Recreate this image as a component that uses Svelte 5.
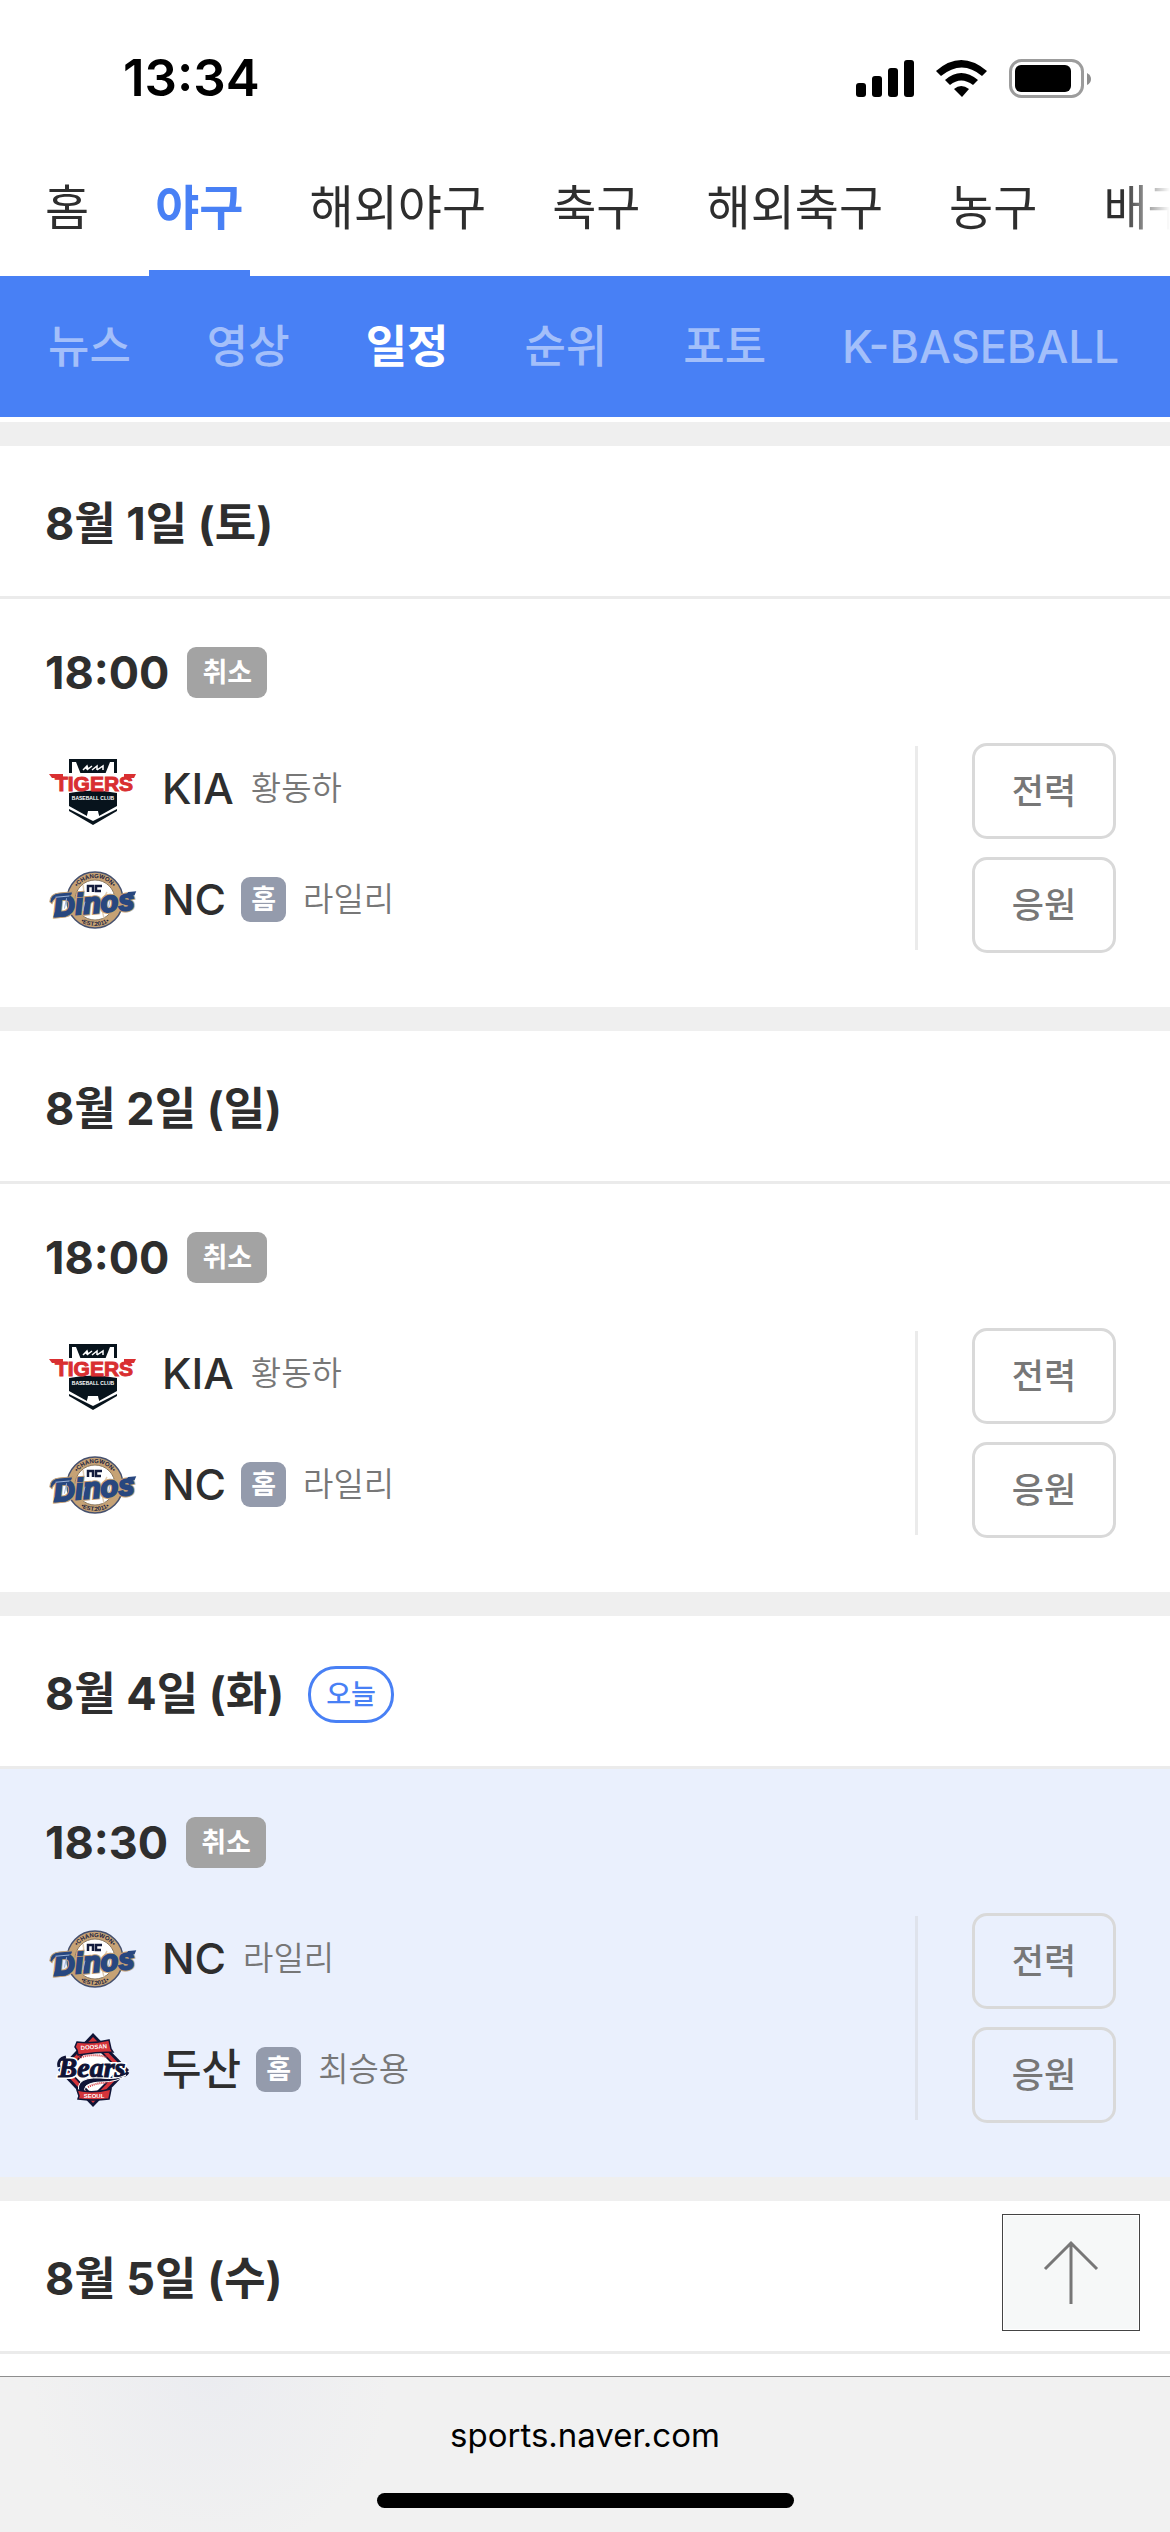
<script>
  const sports = ['홈', '야구', '해외야구', '축구', '해외축구', '농구', '배구'];
  const menus = ['뉴스', '영상', '일정', '순위', '포토', 'K-BASEBALL'];

  let sport = $state('야구');
  let menu = $state('일정');

  const days = [
    {
      date: '8월 1일 (토)',
      games: [
        {
          time: '18:00',
          status: '취소',
          teams: [
            { name: 'KIA', logo: 'kia', pitcher: '황동하' },
            { name: 'NC', logo: 'nc', pitcher: '라일리', home: true }
          ]
        }
      ]
    },
    {
      date: '8월 2일 (일)',
      games: [
        {
          time: '18:00',
          status: '취소',
          teams: [
            { name: 'KIA', logo: 'kia', pitcher: '황동하' },
            { name: 'NC', logo: 'nc', pitcher: '라일리', home: true }
          ]
        }
      ]
    },
    {
      date: '8월 4일 (화)',
      today: true,
      games: [
        {
          time: '18:30',
          status: '취소',
          teams: [
            { name: 'NC', logo: 'nc', pitcher: '라일리' },
            { name: '두산', logo: 'doosan', pitcher: '최승용', home: true }
          ]
        }
      ]
    },
    { date: '8월 5일 (수)', games: [] }
  ];

  let schedule;
  const toTop = () => schedule.scrollTo({ top: 0 });
</script>

{#snippet kia()}
  <svg class="logo" viewBox="0 0 90 90" aria-hidden="true">
    <path d="M21 16h48v18H21z" fill="#07131c" />
    <path d="M24 19h4l6 15H24zM66 19h-4l-6 15h10z" fill="#fff" />
    <path d="M35 27l4-4 1 3 4-3M44 27l5-4v4M38 25l2 2M49 27l6-4v4" fill="none" stroke="#fff" stroke-width="1.5" />
    <path d="M21 50q24-5 48 0v18L45 82 21 68z" fill="#07131c" />
    <path d="M21 63l18 10 1-5h10l1 5 18-10v3L45 78 21 66z" fill="#fff" />
    <path d="M39 73l2-5h8l2 5-6 3z" fill="#fff" />
    <path d="M2 30h86l-2 8v13q-41-8-71 0l-7-2-1-10-3-1z" fill="#fff" />
    <text x="46" y="48" text-anchor="middle" class="tigers">TIGERS</text>
    <path d="M1 31h14v4H4zM76 31h12l-2 4H76z" fill="#d92f31" />
    <text x="45" y="57" text-anchor="middle" class="club">BASEBALL CLUB</text>
  </svg>
{/snippet}

{#snippet nc()}
  <svg class="logo" viewBox="0 0 90 90" aria-hidden="true">
    <circle cx="47" cy="46" r="28" fill="#c6a275" stroke="#45506e" stroke-width="1.5" />
    <circle cx="47" cy="46" r="20" fill="#fff" stroke="#8b7860" stroke-width="1" />
    <path d="M35 31q3 14-7 21M59 38q-8 12-3 26" fill="none" stroke="#e2cfb5" stroke-width="1.5" />
    <path id="nc-top" d="M25 46a22 22 0 0 1 44 0" fill="none" />
    <path id="nc-bottom" d="M21 46a26 26 0 0 0 52 0" fill="none" />
    <text class="ring"><textPath href="#nc-top" startOffset="50%" text-anchor="middle">•CHANGWON•</textPath></text>
    <text class="ring"><textPath href="#nc-bottom" startOffset="50%" text-anchor="middle">•EST.2011•</textPath></text>
    <path d="M40 38v-6h5v6M54 32h-6v5h5" fill="none" stroke="#131c3d" stroke-width="2.5" />
    <g transform="rotate(-5 45 48)">
      <text x="46" y="59" text-anchor="middle" class="dinos dinos-edge">Dinos</text>
      <path d="M2 44q1-8 10-8h14l-2 4H12q-5 0-8 6z" fill="#28477f" stroke="#c6a275" />
      <path d="M77 45l4-4h8l-2 4z" fill="#28477f" />
      <path d="M6 55h14l-3 5H4z" fill="#28477f" />
      <text x="46" y="59" text-anchor="middle" class="dinos">Dinos</text>
      <path d="M8 40h14M19 42l-3 10M37 47l-3 9M62 48l-2 7" stroke="#9db4d8" stroke-width="1" />
    </g>
  </svg>
{/snippet}

{#snippet doosan()}
  <svg class="logo" viewBox="0 0 90 90" aria-hidden="true">
    <path d="M45 9l36 37-36 37L10 46z" fill="#101436" />
    <path d="M45 13l32 33-32 33-31-33z" fill="#d4343a" />
    <path d="M45 18l27 28-27 28-26-28z" fill="#101436" />
    <path d="M45 21l25 25-25 25-24-25z" fill="#fff" />
    <path d="M29 18q16 2 32-2l2 9 2 3q-18 0-35 3l-1-5-2-3z" fill="#d4343a" stroke="#101436" stroke-width="1.5" />
    <text x="46" y="25" text-anchor="middle" class="ribbon" transform="rotate(-4 46 25)">DOOSAN</text>
    <path d="M31 34q12-5 28-1" fill="none" stroke="#d4343a" stroke-width="2" stroke-dasharray="1 1" />
    <text x="44" y="53" text-anchor="middle" class="bears bears-edge">Bears</text>
    <text x="44" y="53" text-anchor="middle" class="bears">Bears</text>
    <path d="M11 43q-2-8 7-10M72 51q5 2 8-3" fill="none" stroke="#101436" stroke-width="3" />
    <path d="M78 51q-10 5-25 3-16-1-21 5-4 6 2 12l4-2q-3-4 0-7 5-4 16-4 16 0 24-7z" fill="#101436" stroke="#fff" stroke-width="1" />
    <path d="M40 63q10-5 21-4" fill="none" stroke="#d4343a" stroke-width="2" stroke-dasharray="1 1" />
    <path d="M29 66q16 4 34-1l-1 5-1 5q-16 2-31 0l1-3z" fill="#d4343a" stroke="#101436" stroke-width="1.5" />
    <text x="46" y="74" text-anchor="middle" class="ribbon">SEOUL</text>
  </svg>
{/snippet}

<div class="screen">
  <div class="status-bar">
    <span class="clock">13:34</span>
    <svg class="status-icons" viewBox="0 0 236 40" aria-hidden="true">
      <rect x="0" y="25" width="10" height="14" rx="3" />
      <rect x="16" y="18" width="10" height="21" rx="3" />
      <rect x="32" y="10" width="10" height="29" rx="3" />
      <rect x="48" y="2" width="10" height="37" rx="3" />
      <path d="M80 13q25-22 51 0l-5 5q-20-17-41 0z" />
      <path d="M89 22q16-14 33 0l-5 5q-12-9-23 0z" />
      <path d="M98 31q7-6 15 0l-7 8z" />
      <rect x="154.500" y="2.500" width="72" height="36" rx="11" fill="none" stroke="#9c9c9c" stroke-width="3" />
      <rect x="159" y="7" width="56" height="27" rx="6" />
      <path d="M231 15q4 2 4 6t-4 6z" fill="#8e8e8e" />
    </svg>
  </div>

  <nav class="sports" aria-label="종목">
    {#each sports as name}
      <a href="#{name}" class:active={name === sport} onclick={() => (sport = name)}>{name}</a>
    {/each}
  </nav>

  <nav class="menus" aria-label="메뉴">
    {#each menus as name}
      <a href="#{name}" class:active={name === menu} onclick={() => (menu = name)}>{name}</a>
    {/each}
  </nav>

  <div class="content">
    <main bind:this={schedule}>
      {#each days as day}
        <section class:today={day.today}>
          <header>
            <h2>{day.date}</h2>
            {#if day.today}<span class="today-badge">오늘</span>{/if}
          </header>
          {#each day.games as game}
            <article>
              <div class="time-row">
                <time>{game.time}</time>
                <span class="status">{game.status}</span>
              </div>
              <div class="match">
                <ul class="teams">
                  {#each game.teams as team}
                    <li>
                      {#if team.logo === 'kia'}
                        {@render kia()}
                      {:else if team.logo === 'nc'}
                        {@render nc()}
                      {:else}
                        {@render doosan()}
                      {/if}
                      <strong>{team.name}</strong>
                      {#if team.home}<span class="home">홈</span>{/if}
                      <span class="pitcher">{team.pitcher}</span>
                    </li>
                  {/each}
                </ul>
                <div class="divider"></div>
                <div class="actions">
                  <button type="button">전력</button>
                  <button type="button">응원</button>
                </div>
              </div>
            </article>
          {/each}
        </section>
      {/each}
    </main>
    <button type="button" class="top" aria-label="맨 위로" onclick={toTop}>
      <svg viewBox="0 0 60 66" aria-hidden="true">
        <path d="M30 64V3M4 29L30 3l26 26" fill="none" stroke="#777" stroke-width="3" />
      </svg>
    </button>
  </div>

  <footer>
    <span class="url">sports.naver.com</span>
    <div class="home-bar"></div>
  </footer>
</div>

<style>
  :global(body) {
    margin: 0;
    background: #fff;
  }

  .screen {
    display: flex;
    flex-direction: column;
    height: 100vh;
    overflow: hidden;
    color: #2e2e2e;
    font-family: Inter, 'Noto Sans CJK KR', sans-serif;
  }

  a {
    color: inherit;
    text-decoration: none;
    white-space: nowrap;
  }

  /* status bar */
  .status-bar {
    display: flex;
    flex: none;
    align-items: center;
    justify-content: space-between;
    height: 156px;
    padding: 0 78px 0 123px;
    box-sizing: border-box;
    color: #000;
  }

  .clock {
    font-size: 51px;
    font-weight: 600;
    line-height: 60px;
  }

  .status-icons {
    width: 236px;
    height: 40px;
  }

  /* sport tabs */
  .sports {
    display: flex;
    flex: none;
    gap: 54px;
    height: 120px;
    padding-left: 39px;
    overflow: hidden;
    font-size: 48px;
    line-height: 104px;
    -webkit-mask-image: linear-gradient(to left, transparent, #000 48px);
    mask-image: linear-gradient(to left, transparent, #000 48px);
  }

  .sports a {
    flex: none;
    box-sizing: border-box;
    height: 120px;
    padding: 0 6px;
  }

  .sports .active {
    border-bottom: 6px solid #4880f5;
    color: #4880f5;
    font-weight: 700;
  }

  /* sub menu */
  .menus {
    display: flex;
    flex: none;
    gap: 76px;
    height: 141px;
    padding-left: 48px;
    overflow: hidden;
    background: #4880f5;
    color: rgba(255, 255, 255, 0.5);
    font-size: 45px;
    font-weight: 500;
    line-height: 141px;
  }

  .menus .active {
    color: #fff;
    font-weight: 700;
  }

  /* schedule */
  .content {
    position: relative;
    flex: 1;
    min-height: 0;
    padding-top: 5px;
  }

  main {
    height: 100%;
    overflow: hidden;
  }

  section {
    border-top: 24px solid #efefef;
  }

  header {
    display: flex;
    align-items: center;
    gap: 24px;
    height: 153px;
    padding: 6px 45px 0;
    box-sizing: border-box;
    border-bottom: 3px solid #ebebeb;
  }

  h2 {
    margin: 0;
    font-size: 45px;
    font-weight: 700;
    line-height: 60px;
  }

  .today-badge {
    padding: 0 15px;
    border: 3px solid #4880f5;
    border-radius: 28px;
    color: #4880f5;
    font-size: 27px;
    font-weight: 500;
    line-height: 51px;
  }

  article {
    padding: 48px 54px 54px 45px;
  }

  .today article {
    background: #eaf0fd;
  }

  .time-row {
    display: flex;
    align-items: center;
    gap: 18px;
    margin-bottom: 45px;
  }

  time {
    font-size: 45px;
    font-weight: 700;
    line-height: 51px;
  }

  .status {
    padding: 0 15px;
    border-radius: 9px;
    background: #a3a3a3;
    color: #fff;
    font-size: 27px;
    font-weight: 700;
    line-height: 51px;
  }

  .match {
    display: flex;
    align-items: center;
  }

  .teams {
    display: flex;
    flex: 1;
    flex-direction: column;
    align-self: flex-start;
    gap: 21px;
    margin: 0;
    padding: 0 0 0 3px;
    list-style: none;
  }

  li {
    display: flex;
    align-items: center;
    height: 90px;
  }

  .logo {
    width: 90px;
    height: 90px;
    margin-right: 24px;
  }

  strong {
    font-size: 43px;
    font-weight: 500;
    line-height: 60px;
  }

  .home {
    width: 45px;
    margin-left: 15px;
    border-radius: 9px;
    background: #949bac;
    color: #fff;
    font-size: 27px;
    font-weight: 700;
    line-height: 45px;
    text-align: center;
  }

  .pitcher {
    margin-left: 17px;
    color: #777;
    font-size: 33px;
    font-weight: 350;
    line-height: 60px;
  }

  .divider {
    width: 3px;
    height: 204px;
    background: #ebebeb;
  }

  .today .divider {
    background: #dfe3ec;
  }

  .actions {
    display: flex;
    flex-direction: column;
    gap: 18px;
    margin-left: 54px;
  }

  .actions button {
    width: 144px;
    height: 96px;
    padding: 0;
    border: 3px solid #d9d9d9;
    border-radius: 15px;
    background: transparent;
    color: #777;
    font-family: inherit;
    font-size: 35px;
    font-weight: 500;
    line-height: 90px;
  }

  .top {
    position: absolute;
    right: 30px;
    bottom: 45px;
    display: flex;
    align-items: center;
    justify-content: center;
    width: 138px;
    height: 117px;
    padding: 0;
    border: 1px solid #444;
    background: #f6f8f8;
    box-shadow: inset 0 0 0 1px #fff;
  }

  .top svg {
    width: 60px;
    height: 66px;
  }

  /* browser bar */
  footer {
    display: flex;
    flex: none;
    flex-direction: column;
    align-items: center;
    justify-content: space-between;
    height: 156px;
    padding: 33px 0 24px;
    box-sizing: border-box;
    border-top: 1px solid #8e8e8e;
    background: radial-gradient(circle at 18% 0, #ebecf0, #f1f1f1 180px);
    color: #000;
  }

  .url {
    font-size: 33px;
    line-height: 50px;
  }

  .home-bar {
    width: 417px;
    height: 15px;
    border-radius: 8px;
    background: #000;
  }

  /* logo lettering */
  .logo text {
    font-family: 'Liberation Sans', sans-serif;
    font-weight: 700;
  }

  .logo .tigers {
    fill: #d92f31;
    stroke: #d92f31;
    font-size: 21px;
  }

  .logo .club {
    fill: #fff;
    font-size: 5px;
  }

  .logo .ring {
    fill: #1c2340;
    font-size: 6px;
  }

  .logo .dinos {
    fill: #28477f;
    stroke: #28477f;
    stroke-width: 2px;
    font-size: 29px;
    font-style: italic;
  }

  .logo .dinos-edge {
    stroke: #c6a275;
    stroke-width: 4px;
  }

  .logo .bears {
    fill: #101436;
    stroke: #101436;
    font-family: 'Liberation Serif', serif;
    font-size: 28px;
    font-style: italic;
  }

  .logo .bears-edge {
    stroke: #fff;
    stroke-width: 4px;
  }

  .logo .ribbon {
    fill: #fff;
    font-size: 6px;
  }
</style>
